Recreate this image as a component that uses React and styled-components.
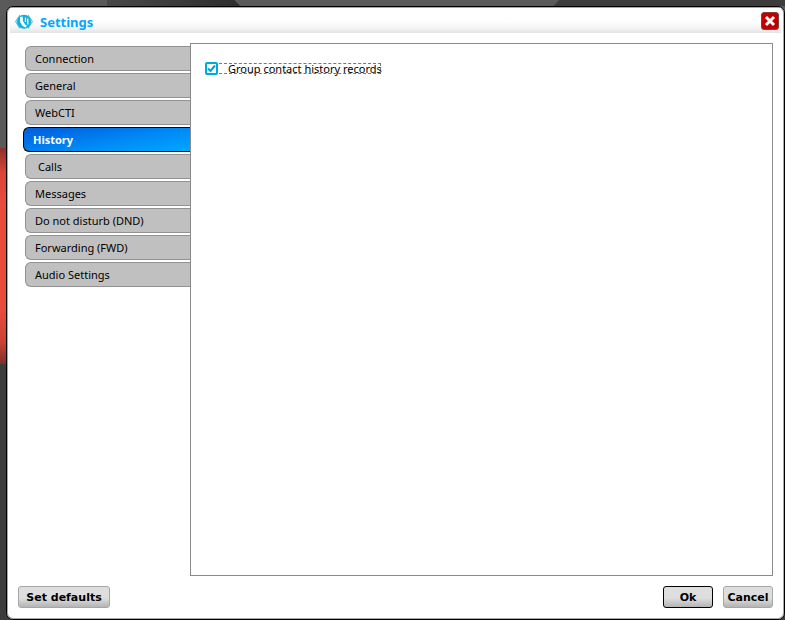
import React, { useState } from "react";
import styled, { createGlobalStyle } from "styled-components";

const GlobalStyle = createGlobalStyle`
  * { box-sizing: border-box; }
  body { margin: 0; font-family: "Noto Sans", "Open Sans", sans-serif; font-size: 11px; color: #000; }
  button, input { font-family: inherit; font-size: inherit; color: inherit; margin: 0; }
`;

const Desktop = styled.div`
  min-height: 100vh;
  display: flex;
  padding: 6px 0 0 6px;
  background:
    linear-gradient(180deg, #8e3028 0, #d84537 24px, #ea4c3c 60px, #ea4c3c 160px, #c94133 195px, #7d302a 216px) 0 148px / 6px 216px no-repeat,
    linear-gradient(135deg, transparent 0 4px, #3c3c3c 5px) right 0 top 0 / 232px 6px no-repeat,
    linear-gradient(45deg, transparent 0 4px, #5a5a5a 5px) 234px 0 / 324px 6px no-repeat,
    linear-gradient(90deg, #484848, #2d2d2d) 107px 0 / 134px 6px no-repeat,
    linear-gradient(180deg, #5a5a5a 0 160px, #3c3c3c 350px);
`;

const Dialog = styled.main`
  flex: 1;
  display: flex;
  flex-direction: column;
  min-width: 0;
  background: #fff;
  border: 1px solid #000;
  border-radius: 7px;
  box-shadow: inset 0 0 0 1px #a8a8a8;
`;

const TitleBar = styled.header`
  display: flex;
  align-items: center;
  height: 25px;
  margin: 1px 3px 0;
  padding: 0 2px 0 5px;
  gap: 7px;
  background: linear-gradient(#fff 50%, #f4f4f4 80%, #e3e3e3);
`;

const Title = styled.h1`
  flex: 1;
  margin: 0;
  padding-top: 2px;
  font-size: 13px;
  line-height: 18px;
  font-weight: 700;
  color: #00a8ff;
`;

const CloseButton = styled.button`
  display: flex;
  width: 18px;
  height: 18px;
  padding: 0;
  border: 1px solid #8d3b3b;
  border-radius: 3px;
  background: #c00000;
`;

const Content = styled.div`
  flex: 1;
  display: flex;
  padding: 10px 11px 0 16px;
`;

const TabList = styled.nav`
  flex: 0 0 167px;
  display: flex;
  flex-direction: column;
  align-items: flex-end;
  gap: 2px;
  padding-top: 3px;
`;

const Tab = styled.button`
  width: ${(p) => (p.$active ? "167px" : "165px")};
  height: 25px;
  padding: 0 0 0 ${(p) => (p.$nested ? "12px" : "9px")};
  text-align: left;
  line-height: 16px;
  border: 1px solid ${(p) => (p.$active ? "#000" : "#929292")};
  border-right: 0;
  border-radius: 6px 0 0 6px;
  font-weight: ${(p) => (p.$active ? 700 : 400)};
  color: ${(p) => (p.$active ? "#fff" : "#000")};
  background: ${(p) => (p.$active ? "linear-gradient(170deg, #0063e0 10%, #0088f5 55%, #00a8ff)" : "#c0c0c0")};
`;

const Panel = styled.section`
  flex: 1;
  min-width: 0;
  padding: 17px 14px;
  border: 1px solid #8a8a8e;
`;

const Option = styled.label`
  display: flex;
  width: max-content;
  align-items: center;
  position: relative;
  height: 15px;
  gap: 10px;
  white-space: nowrap;
`;

const CheckInput = styled.input`
  appearance: none;
  width: 13px;
  height: 13px;
  border: 2px solid #00a8e0;
  border-radius: 2px;
  background: #fff;
`;

const FocusRing = styled.span`
  position: absolute;
  inset: 2px 1px 2px 14px;
  border: 1px dashed #777;
  border-left: 0;
  pointer-events: none;
`;

const CheckMark = styled.svg`
  position: absolute;
  left: 0;
  top: 1px;
  pointer-events: none;
`;

const Footer = styled.footer`
  display: flex;
  gap: 10px;
  padding: 10px 11px 11px;
`;

const ActionButton = styled.button`
  height: 22px;
  width: ${(p) => (p.$wide ? "92px" : "50px")};
  margin-right: ${(p) => (p.$wide ? "auto" : "0")};
  padding: 1px 0 0;
  border: 1px solid ${(p) => (p.$primary ? "#000" : "#a6a6a6")};
  border-radius: 3px;
  background: linear-gradient(#dedede 55%, #b4b4b4);
  font-family: "DejaVu Sans", sans-serif;
  font-weight: 700;
  line-height: 14px;
  white-space: nowrap;
`;

const TABS = [
  { name: "Connection" },
  { name: "General" },
  { name: "WebCTI" },
  { name: "History" },
  { name: "Calls", nested: true },
  { name: "Messages" },
  { name: "Do not disturb (DND)" },
  { name: "Forwarding (FWD)" },
  { name: "Audio Settings" },
];

function Logo() {
  return (
    <svg width="18" height="18" viewBox="0 -2 18 18" aria-hidden="true">
      <path d="M5 1 L.7 7.5 L5 14.5 M13 1 L17.3 7.5 L13 14.5" fill="none" stroke="#50c5e3" strokeWidth="1.2" />
      <circle cx="9" cy="7.8" r="7" fill="#12afd8" />
      <path d="M5 3 L7.5 2.5 L8.2 5 L7.6 6.5 L10.5 11 L12 11.5 L10.5 13.5 Q7 12.5 5.2 8 Z" fill="#fff" />
      <path d="M10.5 3.5 V8 M12.8 4.5 V10.5" fill="none" stroke="#fff" strokeWidth="1.3" />
    </svg>
  );
}

export default function App() {
  const [active, setActive] = useState("History");
  const [grouped, setGrouped] = useState(true);
  return (
    <>
      <GlobalStyle />
      <Desktop>
        <Dialog>
          <TitleBar>
            <Logo />
            <Title>Settings</Title>
            <CloseButton type="button" aria-label="Close">
              <svg width="16" height="16" viewBox="0 0 16 16" aria-hidden="true">
                <path d="M4 4 L12 12 M12 4 L4 12" stroke="#fff" strokeWidth="3" />
              </svg>
            </CloseButton>
          </TitleBar>
          <Content>
            <TabList aria-label="Settings sections">
              {TABS.map((tab) => (
                <Tab
                  key={tab.name}
                  type="button"
                  $active={tab.name === active}
                  $nested={tab.nested}
                  onClick={() => setActive(tab.name)}
                >
                  {tab.name}
                </Tab>
              ))}
            </TabList>
            <Panel>
              <Option htmlFor="group-records">
                <CheckInput
                  id="group-records"
                  type="checkbox"
                  checked={grouped}
                  onChange={(e) => setGrouped(e.target.checked)}
                />
                {grouped && (
                  <CheckMark width="13" height="13" viewBox="0 0 13 13">
                    <path d="M3 6.5 L5.5 9 L10 3.5" fill="none" stroke="#00a3d9" strokeWidth="2" />
                  </CheckMark>
                )}
                Group contact history records
                <FocusRing />
              </Option>
            </Panel>
          </Content>
          <Footer>
            <ActionButton type="button" $wide>Set defaults</ActionButton>
            <ActionButton type="button" $primary>Ok</ActionButton>
            <ActionButton type="button">Cancel</ActionButton>
          </Footer>
        </Dialog>
      </Desktop>
    </>
  );
}
